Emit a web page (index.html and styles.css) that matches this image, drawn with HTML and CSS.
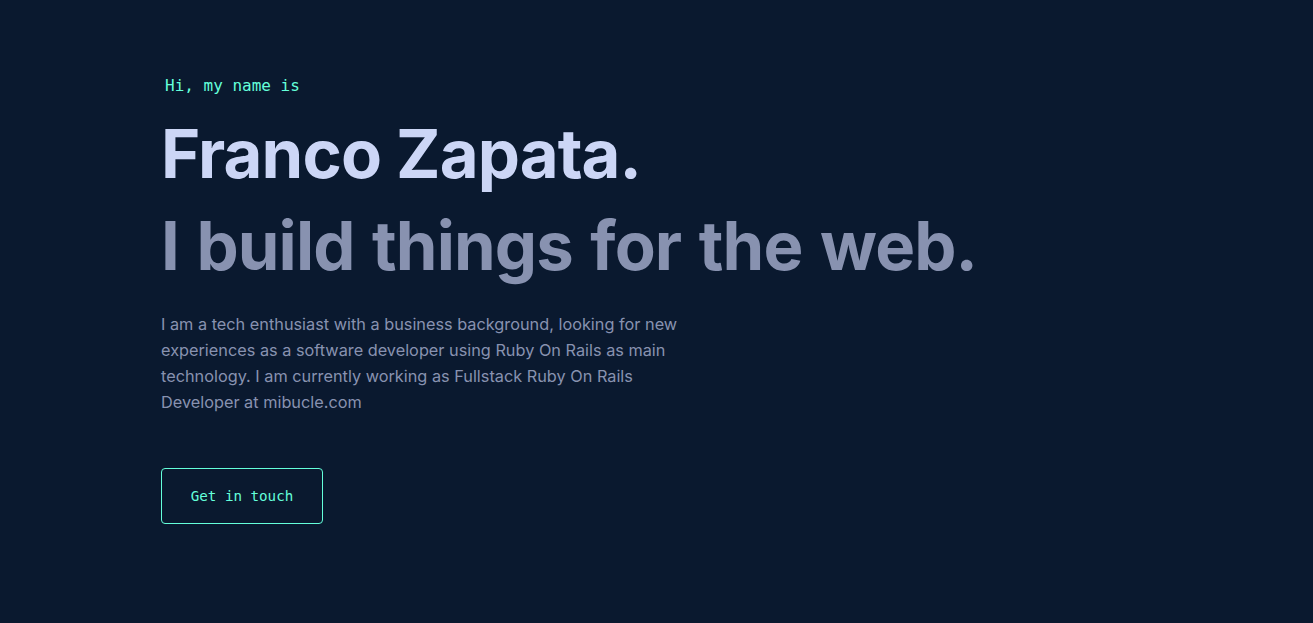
FILE: index.html
```html
<!DOCTYPE html>
<html lang="en">
<head>
<meta charset="utf-8">
<title>Franco Zapata</title>
<link rel="stylesheet" href="styles.css">
</head>
<body>
<main class="main">
  <section class="hero">
    <h1 class="hero-intro">Hi, my name is</h1>
    <h2 class="big-heading name">Franco Zapata.</h2>
    <h3 class="big-heading tagline">I build things for the web.</h3>
    <p class="hero-text">I am a tech enthusiast with a business background, looking for new experiences as a software developer using Ruby On Rails as main technology. I am currently working as Fullstack Ruby On Rails Developer at mibucle.com</p>
    <a class="email-link" href="#contact">Get in touch</a>
  </section>
</main>
</body>
</html>
```

FILE: styles.css
```css
* { box-sizing: border-box; }
html, body {
  margin: 0;
  padding: 0;
  background: #0a192f;
  height: 100%;
}
body {
  font-family: "Inter", "Roboto", sans-serif;
  color: #8892b0;
  overflow: hidden;
}
.main {
  padding: 0 0 0 161px;
}
.hero {
  display: flex;
  flex-direction: column;
  align-items: flex-start;
  padding-top: 75px;
}
.hero-intro {
  margin: 0 0 11px 4px;
  font-family: "DejaVu Sans Mono", "Liberation Mono", monospace;
  font-weight: 400;
  font-size: 16px;
  line-height: 22px;
  color: #64ffda;
}
.big-heading {
  margin: 0;
  font-family: "Inter", "Roboto", sans-serif;
  font-weight: 700;
  font-size: 67px;
  line-height: 92px;
  letter-spacing: -0.9px;
}
.name { color: #ccd6f6; }
.tagline {
  color: #8892b0;
  word-spacing: 2.6px;
}
.hero-text {
  margin: 19px 0 0;
  max-width: 540px;
  font-family: "Inter", "Roboto", sans-serif;
  font-size: 16.3px;
  line-height: 26px;
  color: #8892b0;
}
.email-link {
  margin-top: 53px;
  display: inline-flex;
  align-items: center;
  justify-content: center;
  width: 162px;
  height: 56px;
  border: 1px solid #64ffda;
  border-radius: 4px;
  color: #64ffda;
  text-decoration: none;
  font-family: "DejaVu Sans Mono", "Liberation Mono", monospace;
  font-size: 14.2px;
}
```
